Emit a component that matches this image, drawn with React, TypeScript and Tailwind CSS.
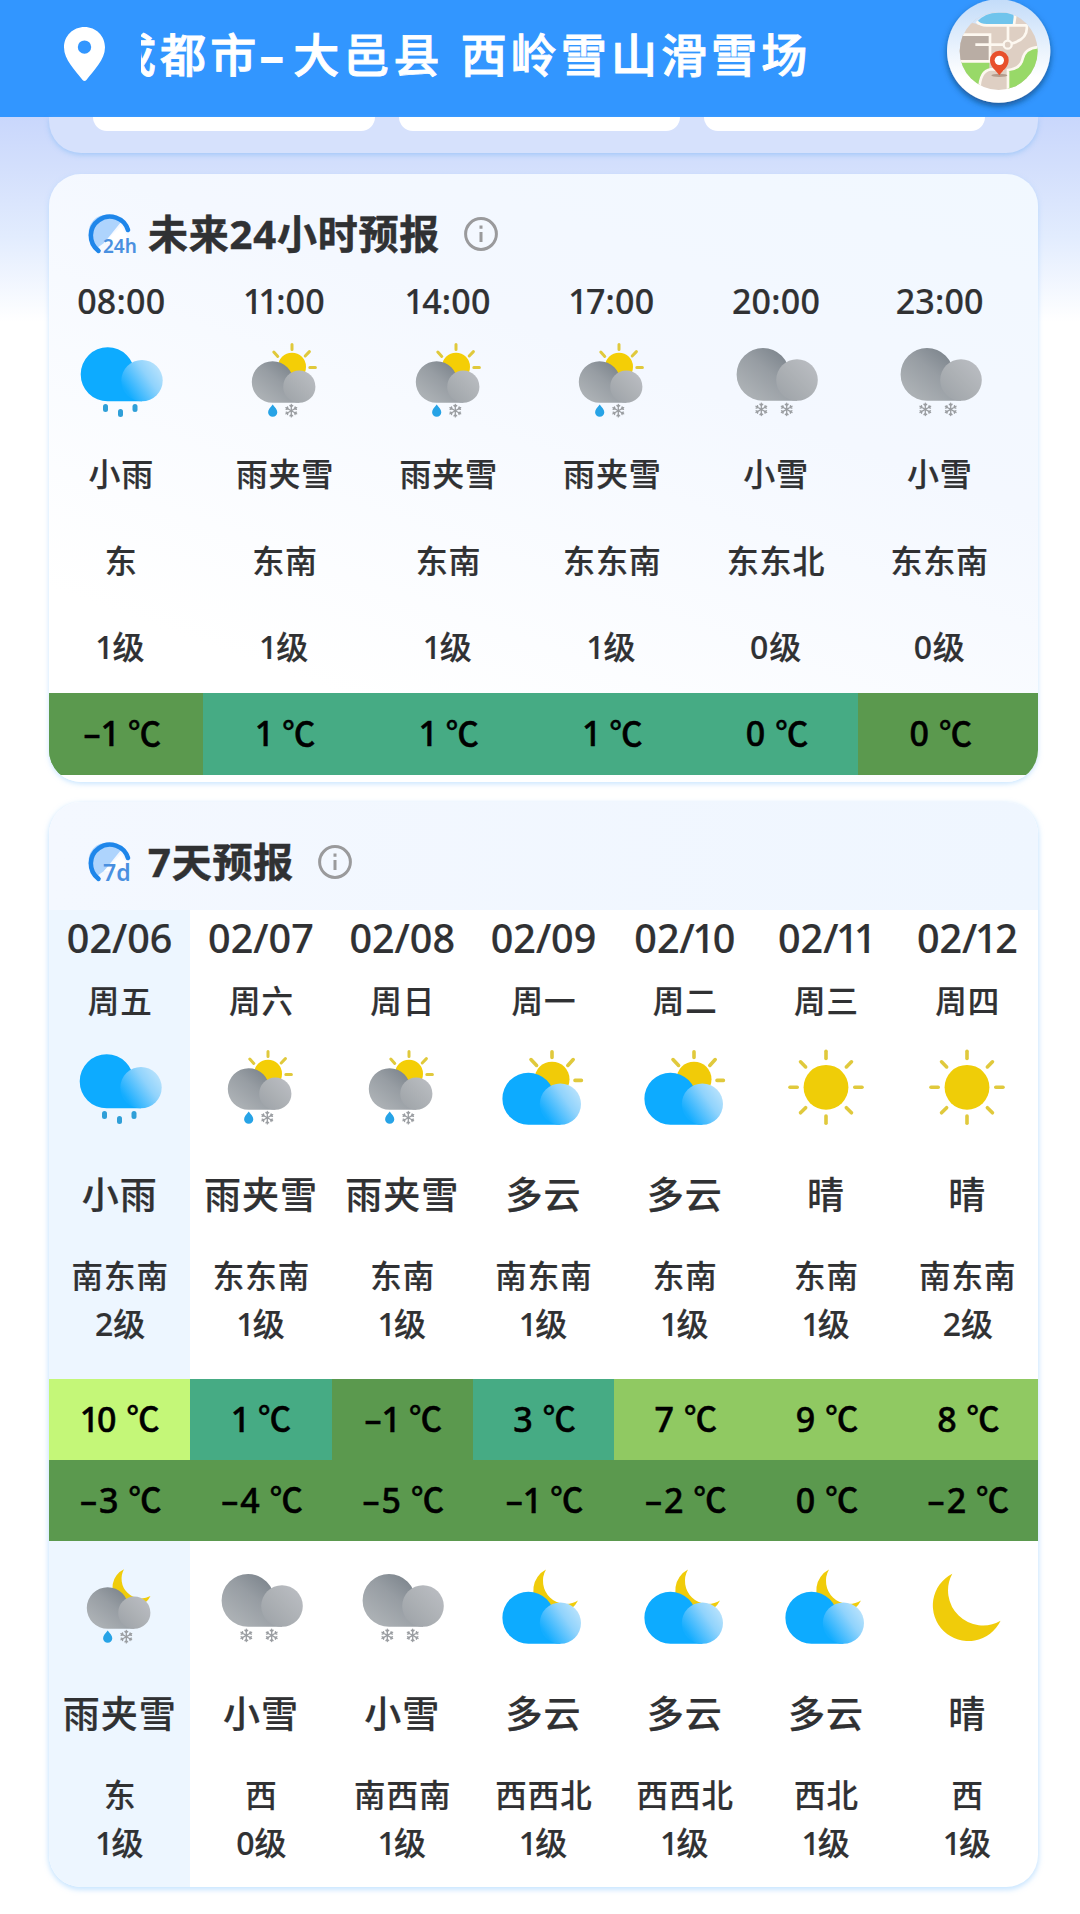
import React from 'react';

type Icon = 'rain' | 'sleet' | 'sleetNight' | 'snow' | 'cloudy' | 'cloudyNight' | 'sunny' | 'clearNight';

interface Hour {
  time: string;
  icon: Icon;
  text: string;
  wind: string;
  level: string;
  temp: string;
  bg: string;
}

interface Half {
  icon: Icon;
  text: string;
  wind: string;
  level: string;
  temp: string;
  bg: string;
}

interface Day {
  date: string;
  week: string;
  day: Half;
  night: Half;
}

const GREEN = 'bg-[#5b994e]';
const TEAL = 'bg-[#46ab84]';
const LIGHT = 'bg-[#90c962]';
const LIME = 'bg-[#c4f778]';

const hours: Hour[] = [
  { time: '08:00', icon: 'rain', text: '小雨', wind: '东', level: '1级', temp: '-1', bg: GREEN },
  { time: '11:00', icon: 'sleet', text: '雨夹雪', wind: '东南', level: '1级', temp: '1', bg: TEAL },
  { time: '14:00', icon: 'sleet', text: '雨夹雪', wind: '东南', level: '1级', temp: '1', bg: TEAL },
  { time: '17:00', icon: 'sleet', text: '雨夹雪', wind: '东东南', level: '1级', temp: '1', bg: TEAL },
  { time: '20:00', icon: 'snow', text: '小雪', wind: '东东北', level: '0级', temp: '0', bg: TEAL },
  { time: '23:00', icon: 'snow', text: '小雪', wind: '东东南', level: '0级', temp: '0', bg: GREEN },
];

const days: Day[] = [
  {
    date: '02/06', week: '周五',
    day: { icon: 'rain', text: '小雨', wind: '南东南', level: '2级', temp: '10', bg: LIME },
    night: { icon: 'sleetNight', text: '雨夹雪', wind: '东', level: '1级', temp: '-3', bg: GREEN },
  },
  {
    date: '02/07', week: '周六',
    day: { icon: 'sleet', text: '雨夹雪', wind: '东东南', level: '1级', temp: '1', bg: TEAL },
    night: { icon: 'snow', text: '小雪', wind: '西', level: '0级', temp: '-4', bg: GREEN },
  },
  {
    date: '02/08', week: '周日',
    day: { icon: 'sleet', text: '雨夹雪', wind: '东南', level: '1级', temp: '-1', bg: GREEN },
    night: { icon: 'snow', text: '小雪', wind: '南西南', level: '1级', temp: '-5', bg: GREEN },
  },
  {
    date: '02/09', week: '周一',
    day: { icon: 'cloudy', text: '多云', wind: '南东南', level: '1级', temp: '3', bg: TEAL },
    night: { icon: 'cloudyNight', text: '多云', wind: '西西北', level: '1级', temp: '-1', bg: GREEN },
  },
  {
    date: '02/10', week: '周二',
    day: { icon: 'cloudy', text: '多云', wind: '东南', level: '1级', temp: '7', bg: LIGHT },
    night: { icon: 'cloudyNight', text: '多云', wind: '西西北', level: '1级', temp: '-2', bg: GREEN },
  },
  {
    date: '02/11', week: '周三',
    day: { icon: 'sunny', text: '晴', wind: '东南', level: '1级', temp: '9', bg: LIGHT },
    night: { icon: 'cloudyNight', text: '多云', wind: '西北', level: '1级', temp: '0', bg: GREEN },
  },
  {
    date: '02/12', week: '周四',
    day: { icon: 'sunny', text: '晴', wind: '南东南', level: '2级', temp: '8', bg: LIGHT },
    night: { icon: 'clearNight', text: '晴', wind: '西', level: '1级', temp: '-2', bg: GREEN },
  },
];

/* ---------- weather icons, all on a 100x80 canvas ---------- */

interface CloudProps {
  tone: 'blue' | 'gray';
  big: [number, number, number];
  small: [number, number, number];
}

const Cloud: React.FC<CloudProps> = ({ tone, big, small }) => {
  const bottom = big[1] + big[2];
  return (
    <g>
      <path
        d={`M${big[0]} ${bottom} A${big[2]} ${big[2]} 0 1 1 ${big[0] + big[2]} ${big[1]} L${small[0]} ${small[1]} V${bottom} Z`}
        fill={tone === 'blue' ? '#0dabff' : 'url(#grayBig)'}
      />
      <circle cx={small[0]} cy={small[1]} r={small[2]} fill={tone === 'blue' ? 'url(#blueSmall)' : 'url(#graySmall)'} />
    </g>
  );
};

const Flake: React.FC<{ x: number; y: number }> = ({ x, y }) => (
  <g transform={`translate(${x} ${y})`} stroke="#9a9da1" strokeWidth="1.4" strokeLinecap="round" fill="none">
    {[0, 60, 120, 180, 240, 300].map((a) => (
      <path key={a} transform={`rotate(${a})`} d="M0 0V-6.2M-1.4 -5.2L0 -3.8L1.4 -5.2" strokeWidth="1.3" />
    ))}
  </g>
);

const Drop: React.FC<{ x: number; y: number }> = ({ x, y }) => (
  <path transform={`translate(${x} ${y})`} d="M0 -6.2C2 -3.6 4.6 -1.2 4.6 1.6A4.6 4.6 0 0 1 -4.6 1.6C-4.6 -1.2 -2 -3.6 0 -6.2Z" fill="#27a3e6" />
);

const RAY = { stroke: '#e0c93c', strokeWidth: 3.6, strokeLinecap: 'round' as const };

const SleetBase = () => (
  <>
    <Cloud tone="gray" big={[37.6, 42, 20.8]} small={[64.3, 46.7, 16.1]} />
    <Drop x={37.7} y={70.6} />
    <Flake x={56.3} y={70.7} />
  </>
);

const CloudyBase = () => <Cloud tone="blue" big={[35.4, 51.7, 26]} small={[67.4, 57.1, 20.6]} />;

const WeatherIcon: React.FC<{ type: Icon }> = ({ type }) => (
  <svg viewBox="0 0 100 80" className="h-20 w-[100px] shrink-0">
    {type === 'rain' && (
      <>
        <Cloud tone="blue" big={[36.7, 34.3, 27]} small={[71, 40.6, 20.7]} />
        <g fill="#2f9fd8">
          <rect x="32" y="64" width="5" height="8" rx="2.5" />
          <rect x="47" y="69" width="5" height="8" rx="2.5" />
          <rect x="61.5" y="64" width="5" height="8" rx="2.5" />
        </g>
      </>
    )}
    {type === 'sleet' && (
      <>
        <circle cx="57" cy="26.7" r="14" fill="#f4ce06" />
        <path d="M57 4.4V9.6M38.8 12L42.8 16.4M74.4 11.6L70.2 16M74.8 27.4H80.4" {...RAY} strokeWidth="3" />
        <SleetBase />
      </>
    )}
    {type === 'sleetNight' && (
      <>
        <path d="M54 3.3A20 20 0 1 0 80.5 30A19.6 19.6 0 0 1 54 3.3Z" fill="#f0cc0a" />
        <SleetBase />
      </>
    )}
    {type === 'snow' && (
      <>
        <Cloud tone="gray" big={[37, 34.4, 26.4]} small={[71, 40, 20.8]} />
        <Flake x={35.3} y={69.4} />
        <Flake x={60.7} y={69.4} />
      </>
    )}
    {type === 'cloudy' && (
      <>
        <circle cx="59" cy="32.2" r="17.5" fill="#f1cb08" />
        <path d="M59 4.8V10.4M38 12.6L43.6 18.4M80.2 12.6L74.8 18.4M82 33.4H88.4" {...RAY} />
        <CloudyBase />
      </>
    )}
    {type === 'cloudyNight' && (
      <>
        <path d="M53 3.5A23.5 23.5 0 1 0 85 34.5A23 23 0 0 1 53 3.5Z" fill="#f0cc0a" />
        <CloudyBase />
      </>
    )}
    {type === 'sunny' && (
      <g transform="translate(50 40.3)">
        <circle r="22.4" fill="#efcd08" />
        {[0, 45, 90, 135, 180, 225, 270, 315].map((a) => (
          <path key={a} d="M0 -28.8V-36" transform={`rotate(${a})`} {...RAY} />
        ))}
      </g>
    )}
    {type === 'clearNight' && (
      <path d="M35.3 7.7A35.6 35.6 0 1 0 83.6 54.7A35 35 0 0 1 35.3 7.7Z" fill="#f0cc0a" />
    )}
  </svg>
);

const IconDefs = () => (
  <svg className="block h-0 w-0 overflow-hidden" width="0" height="0">
    <defs>
      <linearGradient id="grayBig" x1="0.85" y1="0.15" x2="0.2" y2="0.85">
        <stop offset="0" stopColor="#7d858d" />
        <stop offset="0.45" stopColor="#979da3" />
        <stop offset="1" stopColor="#abb0b4" />
      </linearGradient>
      <linearGradient id="graySmall" x1="0.85" y1="0.15" x2="0.15" y2="0.85">
        <stop offset="0" stopColor="#b8bbc0" />
        <stop offset="0.5" stopColor="#adb1b5" />
        <stop offset="1" stopColor="#a1a6ab" />
      </linearGradient>
      <linearGradient id="blueSmall" x1="0.9" y1="0.2" x2="0.12" y2="0.75">
        <stop offset="0" stopColor="#b5e1fc" />
        <stop offset="0.35" stopColor="#90d3fc" />
        <stop offset="0.75" stopColor="#44bbfe" />
        <stop offset="1" stopColor="#14adff" />
      </linearGradient>
    </defs>
  </svg>
);

/* ---------- small parts ---------- */

// "1" is set tighter than the other figures
const Num: React.FC<{ value: string }> = ({ value }) => (
  <span className="whitespace-nowrap">
    {value.split('').map((c, i) =>
      c === '1' ? (
        <span key={i} className="-mx-[0.06em]">1</span>
      ) : c === '-' ? (
        <span key={i} className="mr-[0.06em]">–</span>
      ) : (
        c
      )
    )}
  </span>
);

const Temp: React.FC<{ value: string }> = ({ value }) => (
  <span className="flex items-center justify-center gap-[10px] pl-[2px] text-[34px] whitespace-nowrap text-black [-webkit-text-stroke:0.5px_#000]">
    <Num value={value} />
    <span className="-mt-[3px] font-['Noto_Sans_CJK_SC'] text-[33px]">℃</span>
  </span>
);

const Gauge: React.FC<{ label: string; className: string }> = ({ label, className }) => (
  <svg viewBox="0 0 48 44" className={className}>
    <path d="M17 31L34 10A18 18 0 1 0 10 36Z" fill="#aed4fd" />
    <path d="M17 31L34 14L40 24V31Z" fill="#ffffff" />
    <path d="M11.5 38.8A19 19 0 1 1 41 18" fill="none" stroke="#1e86ea" strokeWidth="4.6" strokeLinecap="round" />
    <text x={label === '7d' ? 16 : 16} y="40.8" fontSize={label === '7d' ? 23 : 19} fontFamily="Noto Sans, sans-serif" fontWeight="600" fill="#4a90e0">
      {label}
    </text>
  </svg>
);

const CardTitle: React.FC<{ gauge: string; title: string }> = ({ gauge, title }) => (
  <div className="flex items-center pl-[37px]">
    <Gauge label={gauge} className="h-11 w-[50px] overflow-visible" />
    <h2 className="ml-[12px] text-[40px] leading-[48px] font-bold tracking-[0.8px] text-[#303133] [-webkit-text-stroke:0.5px_#303133]">
      {title}
    </h2>
    <svg viewBox="0 0 36 36" className="ml-[23px] h-9 w-9" fill="none" stroke="#9a9a9c" strokeWidth="3">
      <circle cx="18" cy="18" r="15.4" />
      <path d="M18 16V26" />
      <path d="M18 9.5V12.8" />
    </svg>
  </div>
);

const MapButton = () => (
  <svg viewBox="0 0 420 360" className="h-[120px] w-[140px] shrink-0">
    <defs>
      <linearGradient id="mapRing" x1="0" y1="0" x2="0" y2="1">
        <stop offset="0" stopColor="#c3dcf9" />
        <stop offset="0.75" stopColor="#ffffff" />
      </linearGradient>
      <clipPath id="mapClip">
        <circle cx="206" cy="153" r="117" />
      </clipPath>
      <filter id="mapShadow" x="-20%" y="-20%" width="140%" height="150%">
        <feDropShadow dx="0" dy="10" stdDeviation="9" floodColor="#173f70" floodOpacity="0.75" />
      </filter>
    </defs>
    <circle cx="206" cy="153" r="155" fill="url(#mapRing)" filter="url(#mapShadow)" />
    <g clipPath="url(#mapClip)">
      <rect x="80" y="30" width="260" height="245" fill="#decfc3" />
      <path d="M80 30H345V75H145Q115 55 100 100H80Z" fill="#d2e4fa" />
      <path d="M252 30L256 76H345L330 30Z" fill="#ded0c6" />
      <path d="M140 66Q165 38 205 38H245Q255 44 250 74H165Z" fill="#6fc4ec" />
      <path d="M86 105H178V183H86Z" fill="#b9ada4" />
      <path d="M86 186H178V206Q148 216 148 275H86Z" fill="#98d968" />
      <path d="M232 280V212Q276 206 280 176Q286 142 330 142V280Z" fill="#98d968" />
      <g fill="none" stroke="#fdf8f0" strokeWidth="8">
        <path d="M140 64Q150 76 170 76H290Q296 120 238 132" />
        <path d="M86 104H180V184M86 184H180M136 134H220" />
        <path d="M234 76V125M252 74L256 46" />
        <path d="M148 275Q148 212 182 208H222M234 275V210Q272 206 278 176Q286 142 330 141" />
        <circle cx="233" cy="134" r="12" fill="#decfc3" strokeWidth="7" />
      </g>
    </g>
    <ellipse cx="208" cy="226" rx="24" ry="5" fill="#b39c8c" />
    <path d="M208 226C198 210 180 202 180 180A28 28 0 0 1 236 180C236 202 218 210 208 226Z" fill="#e8502b" />
    <circle cx="208" cy="181" r="14" fill="#fff" />
  </svg>
);

const HalfDay: React.FC<{ data: Half }> = ({ data }) => (
  <>
    <WeatherIcon type={data.icon} />
    <div className="mt-[45px] h-[46px] text-[37px] leading-[46px] tracking-[1px]">{data.text}</div>
    <div className="mt-[38px] h-10 pl-px text-[31.5px] leading-10 tracking-[1px]">{data.wind}</div>
    <div className="mt-2 h-10 pl-px text-[32px] leading-10">
      <Num value={data.level} />
    </div>
  </>
);

/* ---------- page ---------- */

export default function App() {
  return (
    <div className="h-[1914px] w-[1080px] overflow-hidden bg-white font-['Noto_Sans','Noto_Sans_CJK_SC',sans-serif] font-medium text-[#303133] [-webkit-text-stroke:0.2px]">
      <IconDefs />
      <header className="flex h-[117px] items-start bg-[#3296ff] pl-[64px] pr-[10px]">
        <svg viewBox="0 0 41 54" className="mt-[27px] h-[54px] w-[41px] shrink-0">
          <path
            fillRule="evenodd"
            fill="#fff"
            d="M20.5 0C9 0 0 9 0 20.3C0 33 11 43 18.6 53Q20.5 55 22.4 53C30 43 41 33 41 20.3C41 9 32 0 20.5 0ZM20.5 13.4A6.7 6.7 0 1 1 20.5 26.8A6.7 6.7 0 1 1 20.5 13.4Z"
          />
        </svg>
        <div className="ml-[36px] w-[720px] shrink-0 overflow-hidden">
          <div className="ml-[-31px] flex h-[108px] items-center whitespace-nowrap text-[46px] tracking-[4.1px] text-white [-webkit-text-stroke:0.9px_#fff]">
            <span>成都市</span>
            <span className="w-[33px] [-webkit-text-stroke:2px_#fff]">–</span>
            <span>大邑县</span>
            <span className="ml-[17px]">西岭雪山滑雪场</span>
          </div>
        </div>
        <div className="ml-auto">
          <MapButton />
        </div>
      </header>

      <main className="h-[1797px] bg-[linear-gradient(180deg,#c9d7fc_0px,#d3dffc_50px,#e2ecfe_120px,#ffffff_205px)] px-[49px]">
        {/* tail of the scrolled-away card */}
        <div className="flex h-9 w-[989px] items-start gap-[24px] rounded-b-[32px] bg-[#d6e1fc] pl-[44px] shadow-[0_2px_5px_rgba(130,185,245,0.55)]">
          <div className="h-[14px] w-[282px] rounded-b-[26px] bg-white" />
          <div className="h-[14px] w-[281px] rounded-b-[26px] bg-white" />
          <div className="h-[14px] w-[281px] rounded-b-[26px] bg-white" />
        </div>

        {/* hourly */}
        <section className="mt-[21px] h-[608px] w-[989px] overflow-hidden rounded-[32px] bg-[linear-gradient(20deg,#ffffff_20%,#f4f8ff_65%,#f1f8ff_100%)] shadow-[0_2px_5px_rgba(150,205,255,0.5)]">
          <div className="h-[108px] pt-[36px]">
            <CardTitle gauge="24h" title="未来24小时预报" />
          </div>
          <div className="-ml-[9.6px] flex">
            {hours.map((h) => (
              <div key={h.time} className="flex w-[163.7px] shrink-0 flex-col items-center text-[32px] leading-10 tracking-[0.8px]">
                <div className="h-[39px] text-[34px] leading-[39px] tracking-[0.2px]"><Num value={h.time} /></div>
                <div className="mt-[19px] h-20"><WeatherIcon type={h.icon} /></div>
                <div className="mt-[34px] h-10">{h.text}</div>
                <div className="mt-[47px] h-10">{h.wind}</div>
                <div className="mt-[46px] h-10"><Num value={h.level} /></div>
              </div>
            ))}
          </div>
          <div className={`mt-[26px] flex ${GREEN}`}>
            <div className="-ml-[9.6px] flex">
              {hours.map((h) => (
                <div key={h.time} className={`flex h-[81.5px] w-[163.7px] shrink-0 items-center justify-center ${h.bg}`}>
                  <Temp value={h.temp} />
                </div>
              ))}
            </div>
          </div>
        </section>

        {/* daily */}
        <section className="mt-[20px] h-[1085px] w-[989px] overflow-hidden rounded-[32px] bg-white shadow-[0_2px_5px_1px_rgba(150,205,255,0.5)]">
          <div className="h-[108px] bg-[linear-gradient(90deg,#f4f8ff,#eff6ff)] pt-[36px]">
            <CardTitle gauge="7d" title="7天预报" />
          </div>
          <div className="grid grid-cols-7">
            {days.map((d, i) => (
              <div key={d.date} className={`flex h-[977px] flex-col items-center ${i === 0 ? 'bg-[#edf6ff]' : ''}`}>
                <div className="h-[58px] text-[39.5px] leading-[56px]"><Num value={d.date} /></div>
                <div className="mt-[13px] mb-[26px] h-10 pl-px text-[31.5px] leading-10 tracking-[1px]">{d.week}</div>
                <HalfDay data={d.day} />
                <div className={`mt-[35px] flex h-[81px] w-full shrink-0 items-center justify-center ${d.day.bg}`}>
                  <Temp value={d.day.temp} />
                </div>
                <div className={`mb-[25px] flex h-[81px] w-full shrink-0 items-center justify-center ${d.night.bg}`}>
                  <Temp value={d.night.temp} />
                </div>
                <HalfDay data={d.night} />
              </div>
            ))}
          </div>
        </section>
      </main>
    </div>
  );
}
